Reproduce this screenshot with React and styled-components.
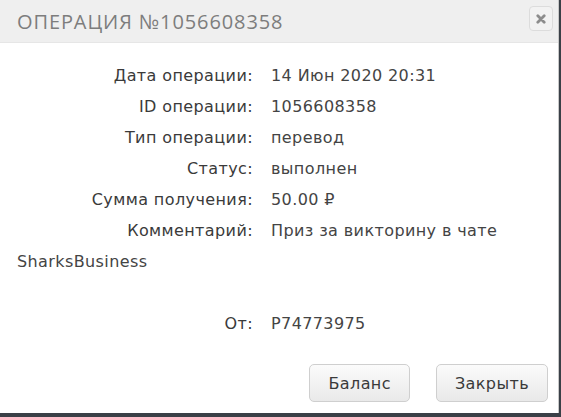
import React from "react";
import styled, { createGlobalStyle } from "styled-components";

const GlobalStyle = createGlobalStyle`
  html, body {
    margin: 0;
    padding: 0;
    background: #3a4047;
  }
  body {
    font-family: "DejaVu Sans", "Liberation Sans", sans-serif;
  }
`;

const rows = [
  { label: "Дата операции:", value: "14 Июн 2020 20:31" },
  { label: "ID операции:", value: "1056608358" },
  { label: "Тип операции:", value: "перевод" },
  { label: "Статус:", value: "выполнен" },
  { label: "Сумма получения:", value: "50.00 ₽" },
  { label: "Комментарий:", value: "Приз за викторину в чате SharksBusiness" },
  { label: "От:", value: "P74773975", gap: true },
];

const App = () => {
  return (
    <>
      <GlobalStyle />
      <Dialog>
        <Header>
          <Title>Операция №1056608358</Title>
          <CloseButton aria-label="close">
            <svg width="10" height="10" viewBox="0 0 10 10">
              <path
                d="M1.8 1.8 L8.2 8.2 M8.2 1.8 L1.8 8.2"
                stroke="#8c8c8c"
                strokeWidth="2.8"
                strokeLinecap="round"
              />
            </svg>
          </CloseButton>
        </Header>
        <Body>
          {rows.map((row) => (
            <Row key={row.label} $gap={row.gap}>
              <Label>{row.label}</Label>
              <Value>{row.value}</Value>
            </Row>
          ))}
        </Body>
        <Footer>
          <Button>Баланс</Button>
          <Button>Закрыть</Button>
        </Footer>
      </Dialog>
    </>
  );
};

export default App;

const Dialog = styled.div`
  width: 558px;
  height: 413px;
  background: #fff;
  border-right: 1px solid #c8c8c8;
  display: flex;
  flex-direction: column;
`;

const Header = styled.div`
  height: 42px;
  background: #efefef;
  border-bottom: 1px solid #e6e6e6;
  display: flex;
  align-items: center;
  justify-content: space-between;
  padding: 0 5px 0 17px;
`;

const Title = styled.h1`
  margin: 0;
  font-family: "Open Sans", "Liberation Sans", sans-serif;
  font-size: 20px;
  font-weight: 400;
  letter-spacing: 0.9px;
  text-transform: uppercase;
  color: #7d7d7d;
`;

const CloseButton = styled.button`
  width: 24px;
  height: 25px;
  margin-top: -5px;
  padding: 0;
  display: flex;
  align-items: center;
  justify-content: center;
  background: #f2f2f2;
  border: 1px solid #dcdcdc;
  border-radius: 4px;
`;

const Body = styled.div`
  flex: 1;
  padding: 17px 20px 0 17px;
  font-size: 16px;
  letter-spacing: 0.4px;
  line-height: 31px;
  color: #444;
`;

const Row = styled.div`
  margin-top: ${(p) => (p.$gap ? "31px" : "0")};
`;

const Label = styled.span`
  display: inline-block;
  width: 236px;
  margin-right: 18px;
  text-align: right;
  color: #3a3a3a;
`;

const Value = styled.span`
  color: #444;
`;

const Footer = styled.div`
  display: flex;
  justify-content: flex-end;
  gap: 26px;
  padding: 0 10px 11px 0;
`;

const Button = styled.button`
  height: 38px;
  padding: 0 18px;
  font-family: "DejaVu Sans", "Liberation Sans", sans-serif;
  font-size: 16px;
  letter-spacing: 0.4px;
  color: #3a3a3a;
  background: linear-gradient(#fbfbfb, #e9e9e9);
  border: 1px solid #cfcfcf;
  border-radius: 5px;
`;
